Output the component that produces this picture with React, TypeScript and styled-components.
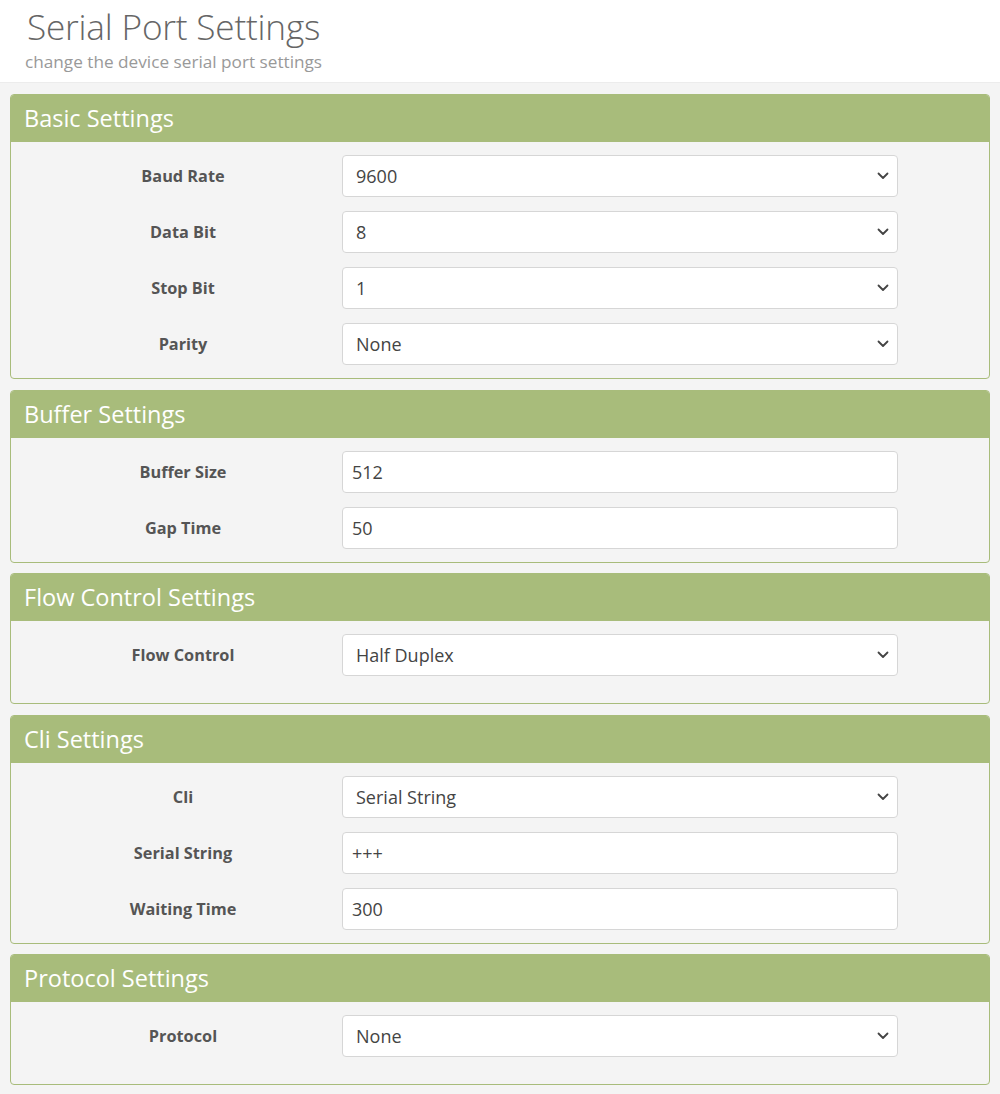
import React from "react";
import styled, { createGlobalStyle } from "styled-components";

const Global = createGlobalStyle`
  html, body { margin: 0; padding: 0; background: #f4f4f4; }
  body { font-family: "Open Sans", "Noto Sans", sans-serif; color: #333; }
`;

const Header = styled.header`
  background: #fff;
  padding: 4px 27px 0;
  height: 78px;
  border-bottom: 1px solid #ececec;
`;

const Title = styled.h1`
  margin: 0;
  font-weight: 300;
  font-size: 35.2px;
  line-height: 44px;
  color: #666;
  letter-spacing: -0.2px;
`;

const Subtitle = styled.div`
  font-size: 17.2px;
  line-height: 24px;
  color: #999;
  margin-top: 2px;
  margin-left: -2px;
`;

const Main = styled.main`
  padding: 11px 10px 10px;
  display: flex;
  flex-direction: column;
  gap: 10.6px;
`;

const Card = styled.section`
  border: 1px solid #a8bc7b;
  border-radius: 4px;
  background: #f4f4f4;
  overflow: hidden;
  width: 980px;
  box-sizing: border-box;
`;

const CardHeader = styled.h2`
  margin: 0;
  background: #a8bc7b;
  color: #fff;
  font-weight: 400;
  font-size: 23.5px;
  line-height: 47px;
  height: 47px;
  padding-left: 13px;
`;

const CardBody = styled.div<{ $extra?: boolean }>`
  display: flex;
  flex-direction: column;
  gap: 14px;
  padding: 13px 0 ${(p) => (p.$extra ? 27 : 13)}px;
`;

const Row = styled.div`
  display: grid;
  grid-template-columns: 320px 556px;
  column-gap: 11px;
  align-items: center;
  height: 42px;
`;

const Label = styled.label`
  text-align: center;
  font-weight: 700;
  font-size: 16.3px;
  color: #555;
  padding-left: 24px;
`;

const SelectWrap = styled.div`
  position: relative;
  height: 42px;
`;

const Select = styled.select`
  appearance: none;
  -webkit-appearance: none;
  width: 100%;
  height: 42px;
  box-sizing: border-box;
  border: 1px solid #d6d6d6;
  border-radius: 4px;
  background: #fff;
  font-family: "Open Sans", "Noto Sans", sans-serif;
  font-size: 18px;
  color: #444;
  padding: 0 30px 0 13px;
  outline: none;
`;

const Chevron = styled.svg`
  position: absolute;
  right: 9px;
  top: 16px;
  width: 12px;
  height: 10px;
  pointer-events: none;
`;

const Input = styled.input`
  width: 100%;
  height: 42px;
  box-sizing: border-box;
  border: 1px solid #d6d6d6;
  border-radius: 4px;
  background: #fff;
  font-family: "Open Sans", "Noto Sans", sans-serif;
  font-size: 18px;
  color: #444;
  padding: 0 9px;
  outline: none;
`;

type Field =
  | { kind: "select"; label: string; value: string; options: string[] }
  | { kind: "input"; label: string; value: string };

const sections: { title: string; fields: Field[] }[] = [
  {
    title: "Basic Settings",
    fields: [
      { kind: "select", label: "Baud Rate", value: "9600", options: ["1200", "2400", "4800", "9600", "19200", "38400", "57600", "115200"] },
      { kind: "select", label: "Data Bit", value: "8", options: ["7", "8"] },
      { kind: "select", label: "Stop Bit", value: "1", options: ["1", "2"] },
      { kind: "select", label: "Parity", value: "None", options: ["None", "Odd", "Even"] },
    ],
  },
  {
    title: "Buffer Settings",
    fields: [
      { kind: "input", label: "Buffer Size", value: "512" },
      { kind: "input", label: "Gap Time", value: "50" },
    ],
  },
  {
    title: "Flow Control Settings",
    fields: [{ kind: "select", label: "Flow Control", value: "Half Duplex", options: ["None", "Half Duplex", "Full Duplex"] }],
  },
  {
    title: "Cli Settings",
    fields: [
      { kind: "select", label: "Cli", value: "Serial String", options: ["Disable", "Serial String"] },
      { kind: "input", label: "Serial String", value: "+++" },
      { kind: "input", label: "Waiting Time", value: "300" },
    ],
  },
  {
    title: "Protocol Settings",
    fields: [{ kind: "select", label: "Protocol", value: "None", options: ["None", "Modbus"] }],
  },
];

function FieldRow({ f }: { f: Field }) {
  return (
    <Row>
      <Label>{f.label}</Label>
      {f.kind === "select" ? (
        <SelectWrap>
          <Select defaultValue={f.value}>
            {f.options.map((o) => (
              <option key={o}>{o}</option>
            ))}
          </Select>
          <Chevron viewBox="0 0 12 10">
            <path d="M1.5 2.5 L6 7 L10.5 2.5" fill="none" stroke="#444" strokeWidth="1.8" strokeLinecap="round" strokeLinejoin="round" />
          </Chevron>
        </SelectWrap>
      ) : (
        <Input defaultValue={f.value} />
      )}
    </Row>
  );
}

export default function App() {
  return (
    <>
      <Global />
      <Header>
        <Title>Serial Port Settings</Title>
        <Subtitle>change the device serial port settings</Subtitle>
      </Header>
      <Main>
        {sections.map((s) => (
          <Card key={s.title}>
            <CardHeader>{s.title}</CardHeader>
            <CardBody $extra={s.fields.length === 1}>
              {s.fields.map((f) => (
                <FieldRow key={f.label} f={f} />
              ))}
            </CardBody>
          </Card>
        ))}
      </Main>
    </>
  );
}
